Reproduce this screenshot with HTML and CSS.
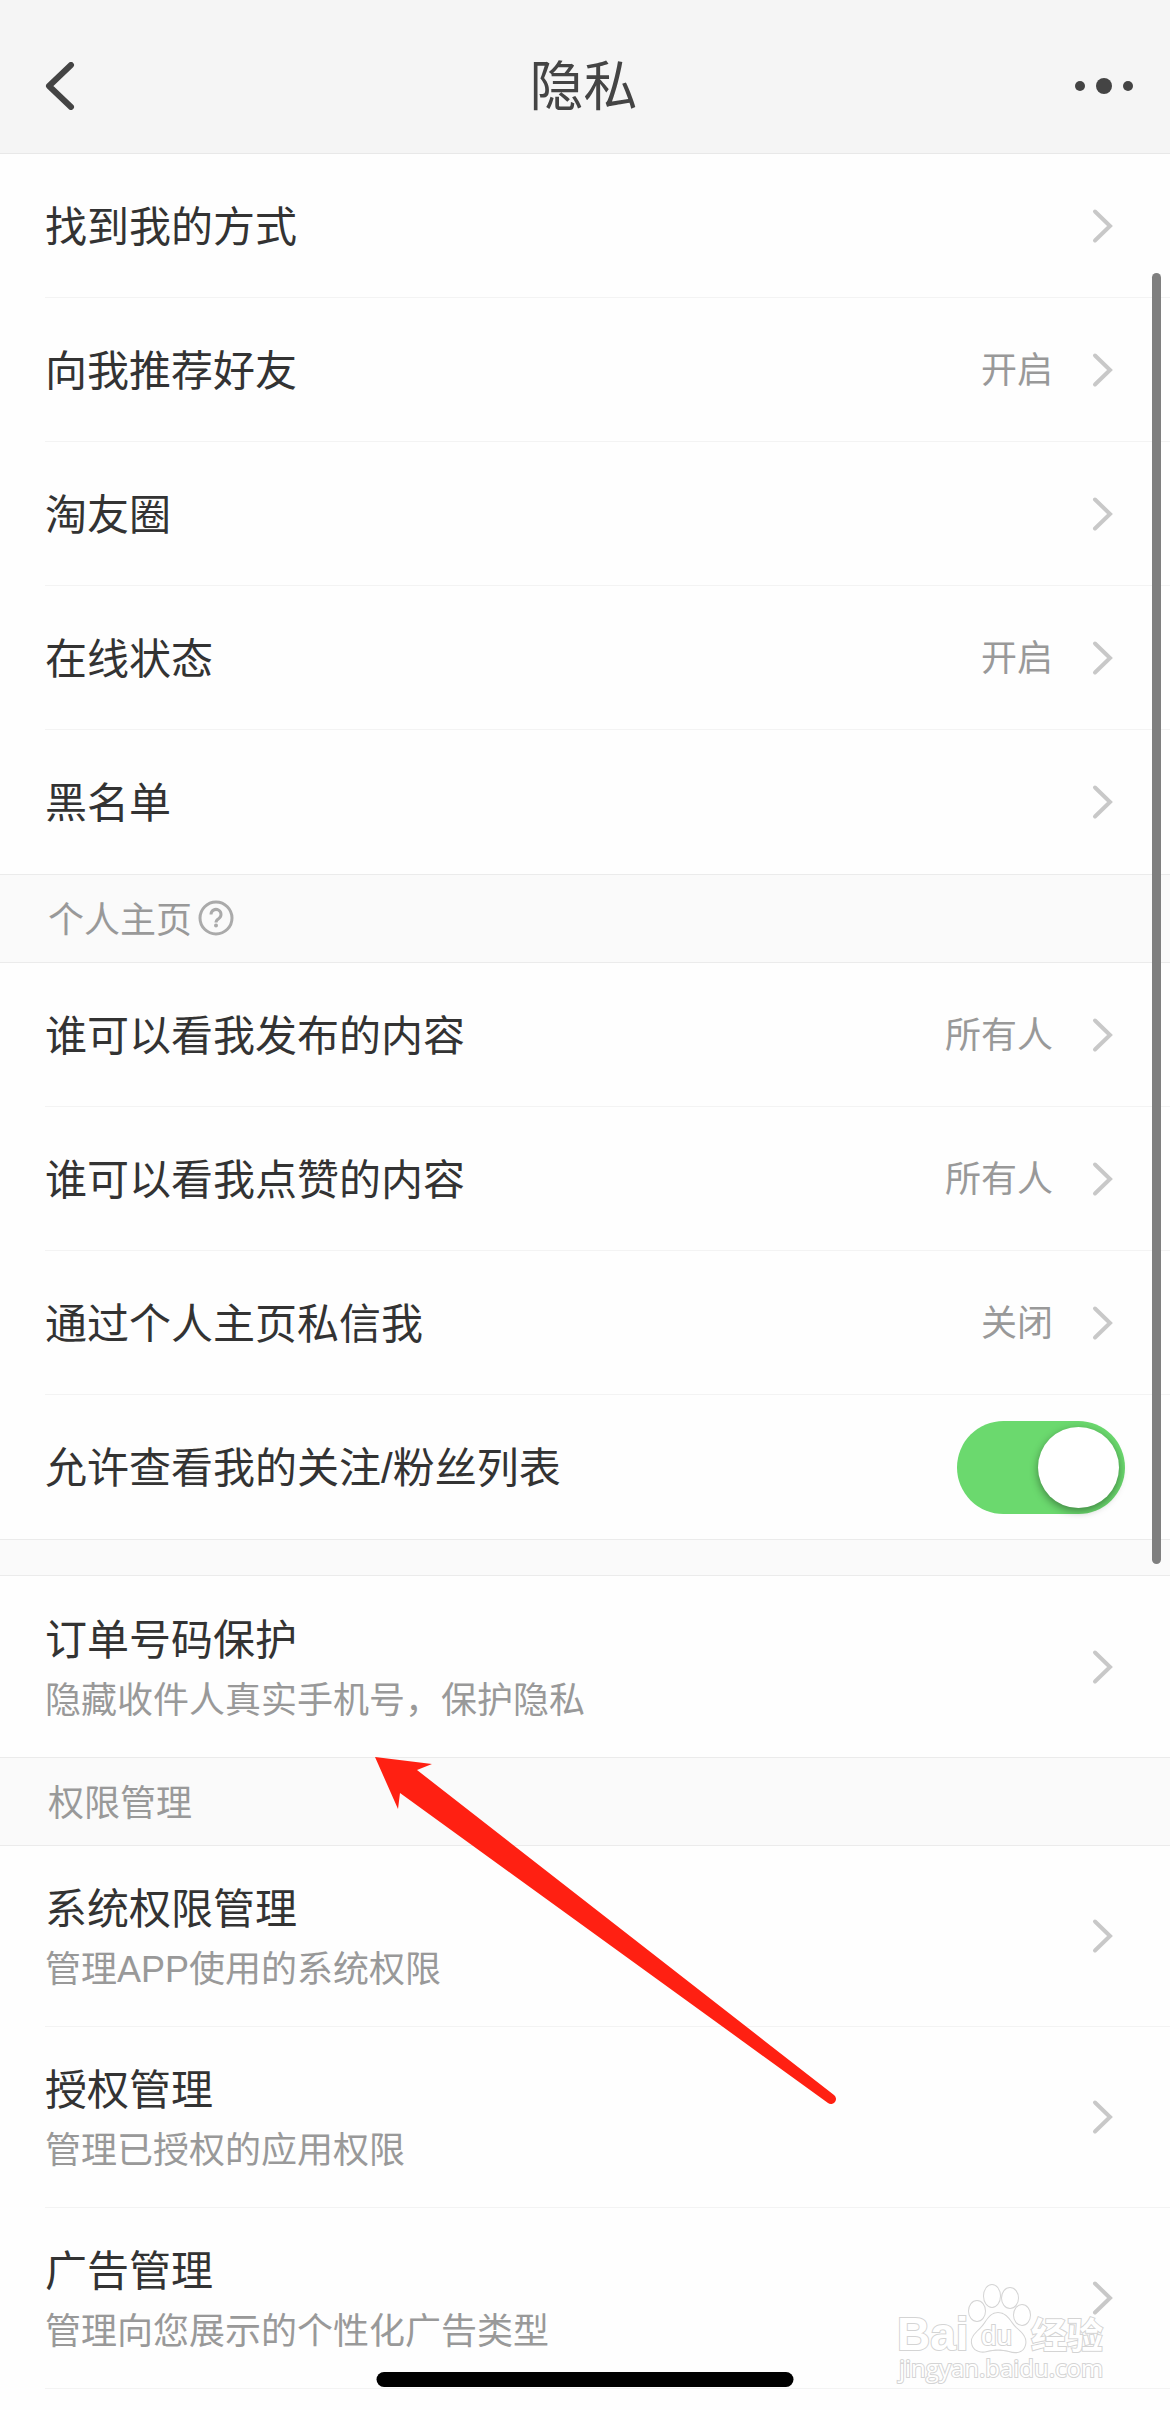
FILE: index.html
```html
<!DOCTYPE html>
<html lang="zh-CN">
<head>
  <meta charset="UTF-8" />
  <meta name="viewport" content="width=device-width, initial-scale=1" />
  <title>隐私</title>
  <link rel="stylesheet" href="styles.css">
</head>
<body>
  <!-- shared icons -->
  <svg class="sprite" aria-hidden="true">
    <symbol id="chevron" viewBox="0 0 36 36">
      <path d="M6 3.5 21 18 6 32.5" fill="none" stroke="#c8c8c8" stroke-width="4" stroke-linecap="round" />
    </symbol>
  </svg>

  <header class="header">
    <button class="icon-button" aria-label="返回">
      <svg width="30" height="48" viewBox="0 0 30 48">
        <path d="M26 3 4 24 26 45" fill="none" stroke="#444" stroke-width="6" stroke-linecap="round" stroke-linejoin="round" />
      </svg>
    </button>
    <h1 class="title">隐私</h1>
    <button class="icon-button" aria-label="更多">
      <svg width="60" height="48" viewBox="0 0 60 48" fill="#444">
        <circle cx="6" cy="24" r="5" />
        <circle cx="30" cy="24" r="8" />
        <circle cx="54" cy="24" r="5" />
      </svg>
    </button>
  </header>

  <main>
    <ul class="list">
      <li><a class="row" href="#"><span class="label">找到我的方式</span><svg class="chevron"><use href="#chevron" /></svg></a></li>
      <li><a class="row" href="#"><span class="label">向我推荐好友</span><span class="value">开启</span><svg class="chevron"><use href="#chevron" /></svg></a></li>
      <li><a class="row" href="#"><span class="label">淘友圈</span><svg class="chevron"><use href="#chevron" /></svg></a></li>
      <li><a class="row" href="#"><span class="label">在线状态</span><span class="value">开启</span><svg class="chevron"><use href="#chevron" /></svg></a></li>
      <li><a class="row" href="#"><span class="label">黑名单</span><svg class="chevron"><use href="#chevron" /></svg></a></li>
    </ul>

    <div class="section">
      <h2 class="section-title">个人主页</h2>
      <button class="icon-button" aria-label="说明">
        <svg width="36" height="36" viewBox="0 0 36 36" fill="none" stroke="#aaa">
          <circle cx="18" cy="18" r="16" stroke-width="3" />
          <path d="M13 14.5a5 5 0 1 1 7.6 4.2c-1.9 1.2-2.6 1.8-2.6 3.8" stroke-width="3" />
          <circle cx="18" cy="25.5" r="2" fill="#aaa" stroke="none" />
        </svg>
      </button>
    </div>

    <ul class="list">
      <li><a class="row" href="#"><span class="label">谁可以看我发布的内容</span><span class="value">所有人</span><svg class="chevron"><use href="#chevron" /></svg></a></li>
      <li><a class="row" href="#"><span class="label">谁可以看我点赞的内容</span><span class="value">所有人</span><svg class="chevron"><use href="#chevron" /></svg></a></li>
      <li><a class="row" href="#"><span class="label">通过个人主页私信我</span><span class="value">关闭</span><svg class="chevron"><use href="#chevron" /></svg></a></li>
      <li>
        <div class="row">
          <label class="label" for="follow-list">允许查看我的关注/粉丝列表</label>
          <input class="switch" type="checkbox" id="follow-list" checked>
        </div>
      </li>
    </ul>

    <div class="gap"></div>

    <ul class="list">
      <li>
        <a class="row tall" href="#">
          <span class="label">订单号码保护<small class="desc">隐藏收件人真实手机号，保护隐私</small></span>
          <svg class="chevron"><use href="#chevron" /></svg>
        </a>
      </li>
    </ul>

    <div class="section">
      <h2 class="section-title">权限管理</h2>
    </div>

    <ul class="list lined">
      <li>
        <a class="row tall" href="#">
          <span class="label">系统权限管理<small class="desc">管理APP使用的系统权限</small></span>
          <svg class="chevron"><use href="#chevron" /></svg>
        </a>
      </li>
      <li>
        <a class="row tall" href="#">
          <span class="label">授权管理<small class="desc">管理已授权的应用权限</small></span>
          <svg class="chevron"><use href="#chevron" /></svg>
        </a>
      </li>
      <li>
        <a class="row tall" href="#">
          <span class="label">广告管理<small class="desc">管理向您展示的个性化广告类型</small></span>
          <svg class="chevron"><use href="#chevron" /></svg>
        </a>
      </li>
    </ul>
  </main>

  <div class="scrollbar"></div>
  <div class="home-bar"></div>

  <!-- red pointer to the order number row -->
  <svg class="arrow" width="470" height="350" viewBox="0 0 470 350" aria-hidden="true">
    <path d="M5 2 62 9 47 15 464 340A4.500 4.500 0 0 1 458 348L30 38 28 54Z" fill="#ff2012" />
  </svg>

  <svg class="watermark" width="220" height="110" viewBox="0 0 220 110" role="img" aria-label="Baidu 经验">
    <g fill="#fff" stroke="#d4d4d4" stroke-width="2" paint-order="stroke">
      <text class="mark-name" x="4" y="74">Bai</text>
      <ellipse cx="84" cy="35" rx="8" ry="10" />
      <ellipse cx="99" cy="20" rx="8" ry="11" />
      <ellipse cx="117" cy="22" rx="8" ry="10" />
      <ellipse cx="129" cy="39" rx="8" ry="10" />
      <path d="M105 37c9 0 12 9 18 15 6 5 11 10 9 17-2 8-10 8-16 6-8-2-14-2-22 0-7 2-14-1-15-8-1-6 4-10 9-15 6-6 8-15 17-15Z" />
      <text class="mark-du" x="88" y="69">du</text>
      <text class="mark-cn" x="138" y="73">经验</text>
      <text class="mark-url" x="6" y="101">jingyan.baidu.com</text>
    </g>
  </svg>
</body>
</html>
```

FILE: styles.css
```css
* {
  box-sizing: border-box;
}
body {
  position: relative;
  min-height: 100vh;
  margin: 0;
  background-color: #fefefe;
  color: #333;
  font-family: "Liberation Sans", "Noto Sans CJK SC", sans-serif;
  font-size: 42px;
}
.sprite {
  display: none;
}
.header {
  display: flex;
  justify-content: space-between;
  align-items: center;
  height: 154px;
  padding: 18px 36px 0 45px;
  background-color: #f5f5f5;
  border-bottom: 1px solid #e8e8e8;
}
.title {
  margin: 0;
  padding: 0 0 6px 18px;
  color: #444;
  font-size: 54px;
  font-weight: normal;
}
.icon-button {
  display: flex;
  padding: 0;
  border: none;
  background: none;
  cursor: pointer;
}
.list {
  margin: 0;
  padding: 0 0 0 45px;
  list-style: none;
}
.row {
  display: flex;
  align-items: center;
  height: 144px;
  padding-right: 45px;
  border-bottom: 1px solid #f3f3f3;
  color: inherit;
  text-decoration: none;
}
.list:not(.lined) li:last-child .row {
  border-bottom: none;
}
.tall {
  height: 181px;
}
.label {
  flex: 1;
  padding-top: 4px;
  line-height: 60px;
}
.tall .label {
  padding-top: 8px;
}
.desc {
  display: block;
  color: #999;
  font-size: 36px;
}
.value {
  margin-right: 36px;
  padding-bottom: 6px;
  color: #999;
  font-size: 36px;
}
.chevron {
  width: 36px;
  height: 36px;
}
.section {
  display: flex;
  align-items: center;
  gap: 6px;
  height: 89px;
  padding: 0 0 2px 48px;
  background-color: #fafafa;
  border-top: 1px solid #ebebeb;
  border-bottom: 1px solid #ebebeb;
}
.section-title {
  margin: 0;
  padding-bottom: 2px;
  color: #999;
  font-size: 36px;
  font-weight: normal;
}
.gap {
  height: 37px;
  background-color: #fafafa;
  border-top: 1px solid #ebebeb;
  border-bottom: 1px solid #ebebeb;
}
.switch {
  appearance: none;
  width: 168px;
  height: 93px;
  margin: 0;
  padding: 6px;
  border-radius: 47px;
  background-color: #ddd;
  cursor: pointer;
}
.switch::before {
  content: "";
  display: block;
  width: 81px;
  height: 81px;
  border-radius: 50%;
  background-color: #fff;
  box-shadow: 0 3px 9px rgba(0, 0, 0, 0.4);
}
.switch:checked {
  background-color: #6bd96e;
}
.switch:checked::before {
  margin-left: auto;
}
.scrollbar {
  position: absolute;
  top: 273px;
  right: 9px;
  width: 9px;
  height: 1291px;
  border-radius: 5px;
  background-color: #7f7f7f;
}
.home-bar {
  position: absolute;
  top: 2372px;
  left: 50%;
  width: 417px;
  height: 15px;
  border-radius: 8px;
  background-color: #000;
  transform: translateX(-50%);
}
.arrow {
  position: absolute;
  top: 1755px;
  left: 370px;
}
.watermark {
  position: absolute;
  top: 2276px;
  right: 57px;
}
.mark-name {
  font-size: 46px;
  font-weight: bold;
}
.mark-du {
  font-size: 28px;
}
.mark-cn {
  font-size: 36px;
  font-weight: bold;
}
.mark-url {
  font-family: "Open Sans", sans-serif;
  font-size: 24px;
}
```
